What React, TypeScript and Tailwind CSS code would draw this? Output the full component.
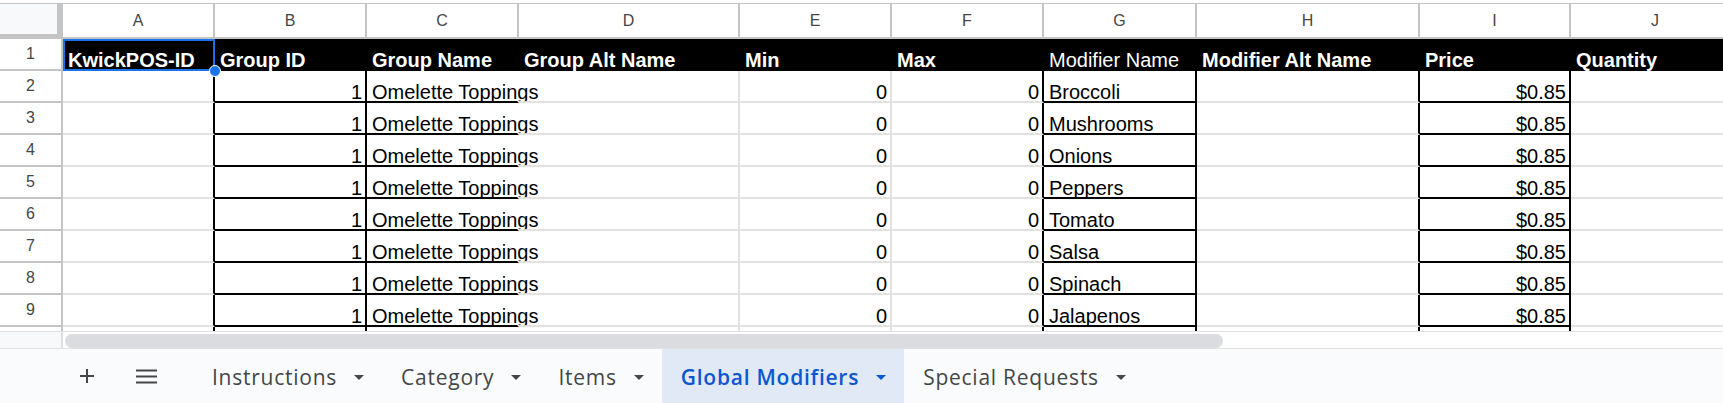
import React from 'react';

type Col = {
  letter: string;
  width: string;
  cell: string;
  right?: boolean;
};

// border colours per column for the data rows (sheet borders are black, gridlines gray)
const columns: Col[] = [
  { letter: 'A', width: 'w-[152px]', cell: 'border-r-black border-b-[#e2e2e2]' },
  { letter: 'B', width: 'w-[152px]', cell: 'border-r-black border-b-black', right: true },
  { letter: 'C', width: 'w-[152px]', cell: 'border-r-transparent border-b-black' },
  { letter: 'D', width: 'w-[221px]', cell: 'border-r-[#e2e2e2] border-b-[#e2e2e2]' },
  { letter: 'E', width: 'w-[152px]', cell: 'border-r-[#e2e2e2] border-b-[#e2e2e2]', right: true },
  { letter: 'F', width: 'w-[152px]', cell: 'border-r-black border-b-[#e2e2e2]', right: true },
  { letter: 'G', width: 'w-[153px]', cell: 'border-r-black border-b-black' },
  { letter: 'H', width: 'w-[223px]', cell: 'border-r-black border-b-[#e2e2e2]' },
  { letter: 'I', width: 'w-[151px]', cell: 'border-r-black border-b-black', right: true },
  { letter: 'J', width: 'w-[170px]', cell: 'border-r-[#e2e2e2] border-b-[#e2e2e2]' },
];

const headers = [
  'KwickPOS-ID',
  'Group ID',
  'Group Name',
  'Group Alt Name',
  'Min',
  'Max',
  'Modifier Name',
  'Modifier Alt Name',
  'Price',
  'Quantity',
];

const modifiers = ['Broccoli', 'Mushrooms', 'Onions', 'Peppers', 'Tomato', 'Salsa', 'Spinach', 'Jalapenos'];

const rows: string[][] = modifiers.map((m) => [
  '',
  '1',
  'Omelette Toppings',
  '',
  '0',
  '0',
  m,
  '',
  '$0.85',
  '',
]);

const tabs = ['Instructions', 'Category', 'Items', 'Global Modifiers', 'Special Requests'];

const RowNumber = ({ n }: { n?: number }) => (
  <div className="w-[63px] shrink-0 h-full box-border border-r-2 border-b-2 border-[#c4c4c4] bg-white flex items-center justify-center text-[16px] text-[#444746]">
    {n}
  </div>
);

const App = () => {
  return (
    <div className="w-[1723px] h-[403px] overflow-hidden bg-white font-['Liberation_Sans',Arial,sans-serif]">
      {/* grid */}
      <div className="h-[331px] overflow-hidden">
        {/* column letters */}
        <div className="mt-[3px] border-t border-[#c4c4c4] flex h-[36px]">
          <div className="w-[63px] shrink-0 h-full box-border bg-[#f8f9fa] border-r-[6px] border-b-[5px] border-[#c4c4c4]" />
          {columns.map((c) => (
            <div
              key={c.letter}
              className={`${c.width} shrink-0 h-full box-border border-r-2 border-b-2 border-[#c4c4c4] flex items-center justify-center text-[16px] text-[#444746]`}
            >
              {c.letter}
            </div>
          ))}
        </div>

        {/* row 1: header */}
        <div className="flex h-[32px]">
          <RowNumber n={1} />
          {columns.map((c, i) => (
            <div
              key={c.letter}
              className={`${c.width} shrink-0 h-full box-border border-r-2 border-b-2 border-black bg-black relative flex items-end pl-[5px] pb-[1px] whitespace-nowrap text-[20px] leading-[16px] text-white ${
                i === 6 ? 'font-normal' : 'font-bold'
              }`}
            >
              {headers[i]}
              {i === 0 && (
                <>
                  <div className="absolute top-0 left-0 -right-[2px] -bottom-[2px] border-2 border-[#1a73e8] z-10" />
                  <div className="absolute -right-[8px] -bottom-[8px] w-[12px] h-[12px] rounded-full bg-[#1a73e8] border border-white z-20" />
                </>
              )}
            </div>
          ))}
        </div>

        {/* data rows, the last one only peeks out above the scrollbar */}
        {[...rows, Array(10).fill('')].map((r, ri) => (
          <div key={ri} className="flex h-[32px]">
            <RowNumber n={ri < rows.length ? ri + 2 : undefined} />
            {columns.map((c, ci) => (
              <div
                key={c.letter}
                className={`${c.width} ${c.cell} shrink-0 h-full box-border border-r-2 border-b-2 flex items-end pb-[1px] whitespace-nowrap text-[20px] leading-[16px] text-black ${
                  c.right ? 'justify-end pr-[3px]' : 'pl-[5px]'
                }`}
              >
                {r[ci]}
              </div>
            ))}
          </div>
        ))}
      </div>

      {/* horizontal scrollbar */}
      <div className="flex h-[17px] border-t border-[#e0e0e0]">
        <div className="w-[63px] shrink-0 h-full bg-[#f8f9fa] border-r-2 border-[#e0e0e0]" />
        <div className="ml-[2px] mt-[2px] h-[14px] w-[1158px] rounded-full bg-[#dadce0]" />
      </div>

      {/* sheet tabs */}
      <div className="flex items-center h-[55px] border-t border-[#e0e0e0] bg-[#f9fbfd] pl-[67px] font-['Open_Sans',Roboto,sans-serif] text-[21px] text-[#444746]">
        <div className="w-[40px] h-[40px] flex items-center justify-center">
          <svg width="16" height="16" viewBox="0 0 16 16">
            <path d="M8 1v14M1 8h14" stroke="#444746" strokeWidth="2" />
          </svg>
        </div>
        <div className="ml-[19px] w-[40px] h-[40px] flex items-center justify-center">
          <svg width="21" height="15" viewBox="0 0 21 15">
            <path d="M0 1.5h21M0 7.5h21M0 13.5h21" stroke="#444746" strokeWidth="2" />
          </svg>
        </div>
        <div className="ml-[27px] flex h-full">
          {tabs.map((t) => {
            const active = t === 'Global Modifiers';
            return (
              <div
                key={t}
                className={`h-full flex items-center pt-[3px] pl-[19px] pr-[18px] tracking-[0.75px] ${
                  active ? 'bg-[#e1e9f7] text-[#0b57d0] font-semibold' : ''
                }`}
              >
                <span>{t}</span>
                <span
                  className={`ml-[17px] w-0 h-0 border-x-[5px] border-x-transparent border-t-[5px] ${
                    active ? 'border-t-[#0b57d0]' : 'border-t-[#444746]'
                  }`}
                />
              </div>
            );
          })}
        </div>
      </div>
    </div>
  );
};

export default App;
